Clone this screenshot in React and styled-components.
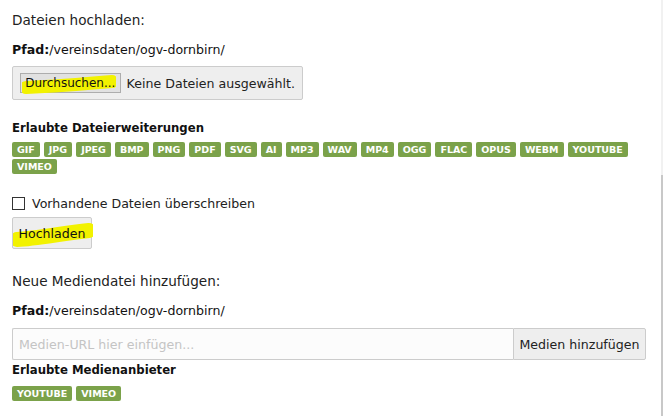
import React from "react"
import styled, { createGlobalStyle } from "styled-components"

const fileTypes = [
  "GIF", "JPG", "JPEG", "BMP", "PNG", "PDF", "SVG", "AI", "MP3", "WAV",
  "MP4", "OGG", "FLAC", "OPUS", "WEBM", "YOUTUBE", "VIMEO",
]

const providers = ["YOUTUBE", "VIMEO"]

const Marker = ({ width, height, stroke }) => (
  <MarkerSvg width={width} height={height} viewBox={`0 0 ${width} ${height}`}>
    <path
      d={`M4 ${height - stroke / 2 - 1} C ${width * 0.3} ${height - stroke / 2 - 2}, ${width * 0.6} ${stroke / 2 + 4}, ${width - 4} ${stroke / 2 + 1}`}
      stroke="#f2f200"
      strokeWidth={stroke}
      strokeLinecap="round"
      fill="none"
    />
  </MarkerSvg>
)

const App = () => {
  return (
    <Page>
      <GlobalStyle />
      <Content>
        <Heading>Dateien hochladen:</Heading>
        <PathLine>
          <b>Pfad:</b>/vereinsdaten/ogv-dornbirn/
        </PathLine>

        <FileBox>
          <BrowseButton>
            <Marker width={94} height={21} stroke={13} />
            <span>Durchsuchen...</span>
          </BrowseButton>
          <FileHint>Keine Dateien ausgewählt.</FileHint>
        </FileBox>

        <Label>Erlaubte Dateierweiterungen</Label>
        <Tags $bottom={21}>
          {fileTypes.map(t => (
            <Tag key={t}>{t}</Tag>
          ))}
        </Tags>

        <CheckRow>
          <Checkbox />
          <span>Vorhandene Dateien überschreiben</span>
        </CheckRow>

        <UploadButton>
          <Marker width={80} height={26} stroke={15} />
          <span>Hochladen</span>
        </UploadButton>

        <Heading $top={23}>Neue Mediendatei hinzufügen:</Heading>
        <PathLine $bottom={9}>
          <b>Pfad:</b>/vereinsdaten/ogv-dornbirn/
        </PathLine>

        <InputGroup>
          <UrlInput placeholder="Medien-URL hier einfügen..." />
          <AddButton>Medien hinzufügen</AddButton>
        </InputGroup>

        <Label $top={2} $bottom={8}>Erlaubte Medienanbieter</Label>
        <Tags>
          {providers.map(t => (
            <Tag key={t}>{t}</Tag>
          ))}
        </Tags>
      </Content>
      <Scrollbar>
        <Thumb />
      </Scrollbar>
    </Page>
  )
}

export default App

const GlobalStyle = createGlobalStyle`
  html, body {
    margin: 0;
    padding: 0;
    background: #fff;
  }
  body {
    font-family: "DejaVu Sans", Verdana, sans-serif;
    color: #222;
  }
`

const Page = styled.div`
  display: flex;
  width: 663px;
  height: 416px;
  overflow: hidden;
`

const Content = styled.div`
  flex: 1;
  padding: 11px 15px 0 12px;
  display: flex;
  flex-direction: column;
  align-items: flex-start;
`

const Scrollbar = styled.div`
  width: 3px;
  background: #f1f1f1;
  display: flex;
  flex-direction: column;
  padding-top: 175px;
`

const Thumb = styled.div`
  flex: 1;
  background: #c8c8c8;
`

const Heading = styled.div`
  font-size: 13.6px;
  line-height: 18px;
  margin-top: ${p => p.$top || 0}px;
  margin-bottom: 13px;
  color: #222;
`

const PathLine = styled.div`
  font-size: 12.6px;
  line-height: 16px;
  margin-bottom: ${p => p.$bottom ?? 8}px;
  color: #111;
`

const FileBox = styled.div`
  display: flex;
  align-items: center;
  gap: 6px;
  width: 291px;
  height: 34px;
  box-sizing: border-box;
  padding: 0 7px;
  background: #eee;
  border: 1px solid #ccc;
  border-radius: 2px;
  font-size: 12.6px;
  white-space: nowrap;
  margin-bottom: 20px;
`

const BrowseButton = styled.div`
  position: relative;
  width: 101px;
  height: 20px;
  box-sizing: border-box;
  display: flex;
  align-items: center;
  justify-content: center;
  background: #e1e1e1;
  border: 1px solid #adadad;
  font-size: 12px;
  color: #111;

  span {
    position: relative;
  }
`

const MarkerSvg = styled.svg`
  position: absolute;
  left: 1px;
  top: 0;
  pointer-events: none;
`

const FileHint = styled.span`
  color: #222;
`

const Label = styled.div`
  font-size: 11.7px;
  font-weight: bold;
  line-height: 16px;
  margin-top: ${p => p.$top || 0}px;
  margin-bottom: ${p => p.$bottom ?? 6}px;
  color: #111;
`

const Tags = styled.div`
  display: flex;
  flex-wrap: wrap;
  gap: 2px 4px;
  margin-bottom: ${p => p.$bottom || 0}px;
`

const Tag = styled.span`
  display: inline-flex;
  align-items: center;
  height: 15px;
  padding: 0 5px;
  background: #7ba24a;
  color: #fff;
  font-size: 9.5px;
  font-weight: bold;
  border-radius: 2px;
`

const CheckRow = styled.label`
  display: flex;
  align-items: center;
  gap: 7px;
  height: 16px;
  font-size: 12.6px;
  color: #222;
  margin-bottom: 6px;
`

const Checkbox = styled.span`
  width: 11px;
  height: 11px;
  border: 1px solid #333;
  background: #fff;
`

const UploadButton = styled.div`
  position: relative;
  width: 80px;
  height: 32px;
  box-sizing: border-box;
  display: flex;
  align-items: center;
  justify-content: center;
  background: #eee;
  border: 1px solid #ccc;
  border-radius: 2px;
  font-size: 12.6px;
  color: #111;

  ${MarkerSvg} {
    top: 4px;
    left: 0;
  }

  span {
    position: relative;
  }
`

const InputGroup = styled.div`
  display: flex;
  width: 634px;
  height: 32px;
`

const UrlInput = styled.input`
  flex: 1;
  box-sizing: border-box;
  height: 32px;
  border: 1px solid #ccc;
  border-right: none;
  border-radius: 2px 0 0 2px;
  background: #fcfcfc;
  padding: 0 6px;
  font-family: "DejaVu Sans", Verdana, sans-serif;
  font-size: 12.6px;
  outline: none;

  &::placeholder {
    color: #c4c4c4;
  }
`

const AddButton = styled.div`
  width: 133px;
  box-sizing: border-box;
  height: 32px;
  display: flex;
  align-items: center;
  justify-content: center;
  background: #eee;
  border: 1px solid #ccc;
  border-radius: 0 2px 2px 0;
  font-size: 12.6px;
  color: #222;
`
